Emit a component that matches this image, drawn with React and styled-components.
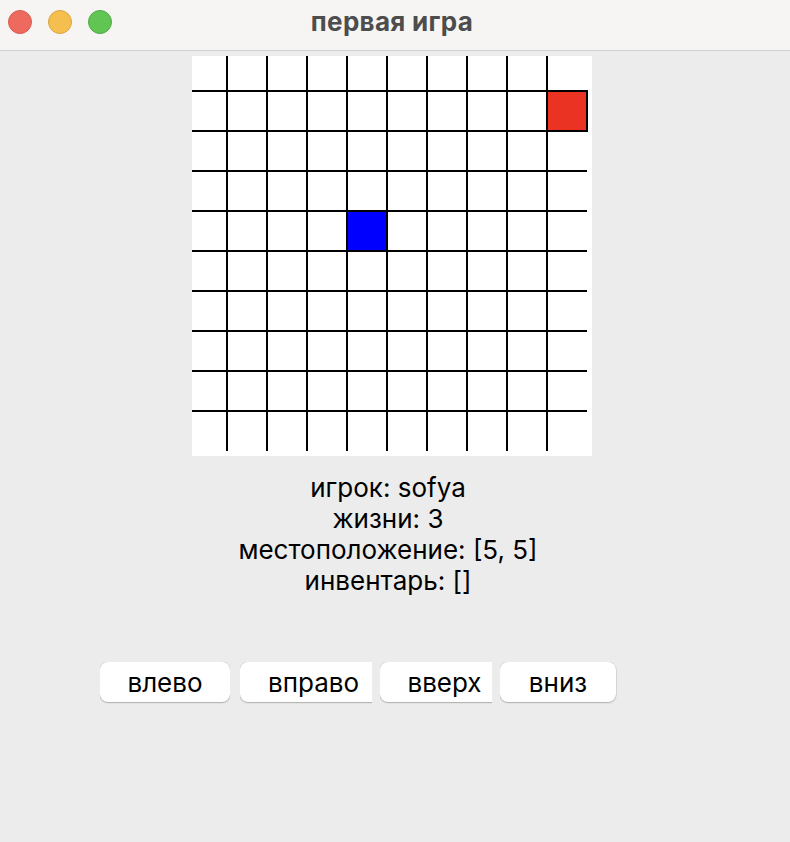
import React from "react";
import styled, { createGlobalStyle } from "styled-components";

const GlobalStyle = createGlobalStyle`
  html, body {
    margin: 0;
    padding: 0;
    background: #ececec;
  }
  body {
    font-family: Inter, "Liberation Sans", Arial, sans-serif;
    color: #000;
  }
`;

const Window = styled.div`
  width: 790px;
  min-height: 842px;
  display: flex;
  flex-direction: column;
  background: #ececec;
`;

const TitleBar = styled.div`
  height: 50px;
  display: flex;
  align-items: center;
  position: relative;
  background: #f6f5f4;
  border-bottom: 1px solid #d3d1cf;
  box-sizing: content-box;
`;

const Lights = styled.div`
  display: flex;
  gap: 16px;
  padding-left: 8px;
  margin-top: -6px;
`;

const Light = styled.span`
  width: 24px;
  height: 24px;
  border-radius: 50%;
  box-sizing: border-box;
  background: ${(p) => p.$fill};
  border: 1px solid ${(p) => p.$edge};
`;

const Title = styled.div`
  position: absolute;
  left: 0;
  right: 6px;
  top: 6px;
  text-align: center;
  font-size: 26px;
  font-weight: 700;
  color: #4d4d4d;
  letter-spacing: 0.3px;
`;

const Content = styled.div`
  display: flex;
  flex-direction: column;
  padding-top: 5px;
`;

const Board = styled.div`
  margin-left: 192px;
  width: 400px;
  display: flex;
  flex-direction: column;
`;

const Canvas = styled.svg`
  display: block;
  width: 400px;
  height: 400px;
  background: #fff;
`;

const Info = styled.div`
  margin-top: 16px;
  text-align: center;
  font-size: 26px;
  line-height: 31px;
  margin-left: -8px;
`;

const Controls = styled.div`
  display: flex;
  margin-top: 66px;
  padding-left: 100px;
`;

const Slot = styled.div`
  width: ${(p) => p.$visible}px;
  margin-left: ${(p) => p.$offset}px;
  height: 42px;
  overflow: hidden;
  flex-shrink: 0;
`;

const Button = styled.button`
  width: ${(p) => p.$full}px;
  height: 40px;
  border: none;
  border-radius: 8px;
  background: #fff;
  box-shadow: 0 0 0 0.5px rgba(0, 0, 0, 0.12), 0 1px 1.5px rgba(0, 0, 0, 0.22);
  font-family: Inter, "Liberation Sans", Arial, sans-serif;
  font-size: 26px;
  color: #000;
  padding: 0;
  cursor: pointer;
`;

const CELL = 40;
const OFF = 35;

const Grid = ({ player, enemy }) => {
  const lines = [];
  for (let k = 0; k < 9; k++) {
    const p = OFF + k * CELL;
    lines.push(<line key={"v" + k} x1={p} y1={0} x2={p} y2={395} />);
    lines.push(<line key={"h" + k} x1={0} y1={p} x2={395} y2={p} />);
  }
  // column 0 is the partial strip on the left/top edge
  const cell = (c, r) => ({ x: OFF + (c - 1) * CELL, y: OFF + (r - 1) * CELL });
  const e = cell(enemy[0], enemy[1]);
  const pl = cell(player[0], player[1]);
  return (
    <Canvas viewBox="0 0 400 400">
      <g stroke="#000" strokeWidth="2">{lines}</g>
      <rect x={e.x} y={e.y} width={CELL} height={CELL} fill="#ea3323" stroke="#000" strokeWidth="2" />
      <rect x={pl.x} y={pl.y} width={CELL} height={CELL} fill="#0000ff" stroke="#000" strokeWidth="2" />
    </Canvas>
  );
};

const buttons = [
  { label: "влево", full: 130, visible: 130, offset: 0 },
  { label: "вправо", full: 147, visible: 132, offset: 10 },
  { label: "вверх", full: 129, visible: 112, offset: 8 },
  { label: "вниз", full: 116, visible: 117, offset: 8 },
];

export default function App() {
  return (
    <>
      <GlobalStyle />
      <Window>
        <TitleBar>
          <Lights>
            <Light $fill="#ee6a5f" $edge="#d85a50" />
            <Light $fill="#f5bf4f" $edge="#d9a53f" />
            <Light $fill="#61c554" $edge="#52a944" />
          </Lights>
          <Title>первая игра</Title>
        </TitleBar>
        <Content>
          <Board>
            <Grid player={[4, 4]} enemy={[9, 1]} />
            <Info>
              <div>игрок: sofya</div>
              <div>жизни: 3</div>
              <div>местоположение: [5, 5]</div>
              <div>инвентарь: []</div>
            </Info>
          </Board>
          <Controls>
            {buttons.map((b) => (
              <Slot key={b.label} $visible={b.visible} $offset={b.offset}>
                <Button $full={b.full}>{b.label}</Button>
              </Slot>
            ))}
          </Controls>
        </Content>
      </Window>
    </>
  );
}
